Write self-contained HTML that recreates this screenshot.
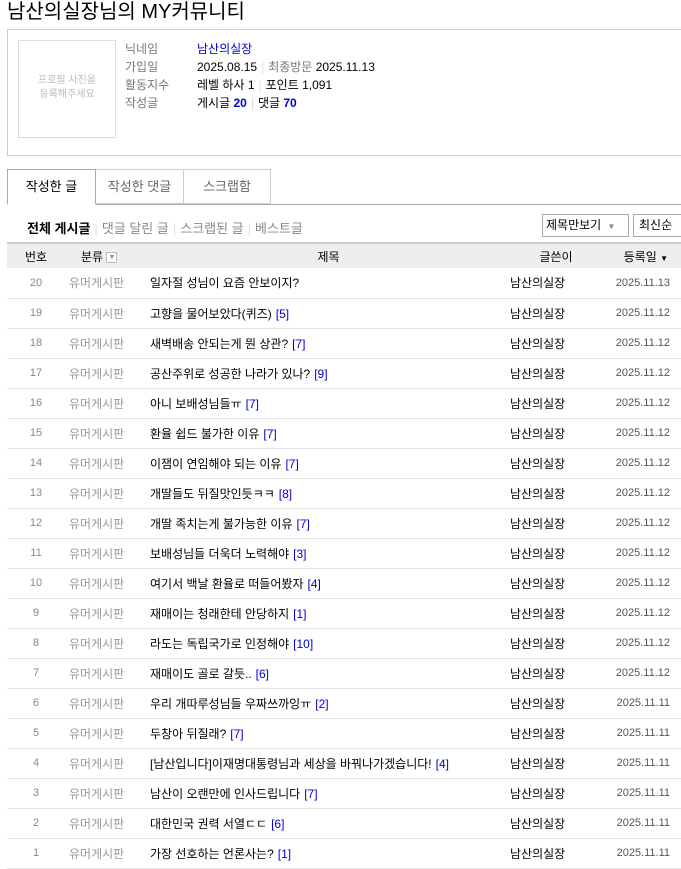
<!DOCTYPE html>
<html><head><meta charset="utf-8"><style>
*{margin:0;padding:0;box-sizing:border-box}
body{width:681px;height:867px;overflow:hidden;background:#fff;font-family:"Liberation Sans","Noto Sans CJK KR","NanumGothic",sans-serif;font-size:12px;color:#000;position:relative}
.a{position:absolute;white-space:nowrap}
.lab{color:#777}
.sep{color:#ddd;margin:0 4px}
.b{color:#0000cc;font-weight:bold}
table{position:absolute;left:7px;top:242px;width:674px;border-collapse:collapse;table-layout:fixed}
th{height:25px;background:#eee;border-top:2px solid #ccc;font-weight:normal;font-size:12px}
td{height:30px;border-bottom:1px solid #e3e3e3;font-size:12px;white-space:nowrap;overflow:hidden}
td.n{color:#888;text-align:center;font-size:11px}
td.c{color:#999;padding-left:4px}
td.t{padding-left:1px}
td.t span{color:#0000cc;margin-left:4px}
td.w{padding-left:2px}
td.d{color:#555;font-size:11px;text-align:right;padding-right:11px}
</style></head><body>
<div class="a" style="left:7px;top:0;font-size:20px;line-height:24px">남산의실장님의 MY커뮤니티</div>
<div class="a" style="left:7px;top:29px;width:680px;height:127px;border:1px solid #ccc"></div>
<div class="a" style="left:18px;top:40px;width:98px;height:98px;border:1px solid #ddd;color:#bbb;font-size:10px;text-align:center;padding-top:33px;line-height:14px;white-space:normal">프로필 사진을<br>등록해주세요</div>
<div class="a lab" style="left:125px;top:40px;line-height:18px">닉네임<br>가입일<br>활동지수<br>작성글</div>
<div class="a" style="left:197px;top:40px;line-height:18px"><span style="color:#0000cc">남산의실장</span><br>2025.08.15<span class="sep">|</span><span class="lab">최종방문</span> 2025.11.13<br>레벨 하사 1<span class="sep">|</span>포인트 1,091<br>게시글 <span class="b">20</span><span class="sep">|</span>댓글 <span class="b">70</span></div>
<div class="a" style="left:7px;top:204px;width:674px;height:1px;background:#aaa"></div>
<div class="a" style="left:7px;top:169px;width:89px;height:36px;border:1px solid #aaa;border-bottom:1px solid #fff;background:#fff;text-align:center;line-height:34px;font-size:13px">작성한 글</div>
<div class="a" style="left:96px;top:169px;width:88px;height:35px;border:1px solid #ccc;border-left:none;text-align:center;line-height:34px;color:#666;font-size:13px">작성한 댓글</div>
<div class="a" style="left:184px;top:169px;width:87px;height:35px;border:1px solid #ccc;border-left:none;text-align:center;line-height:34px;color:#666;font-size:13px">스크랩함</div>
<div class="a" style="left:27px;top:218px;font-size:13px;color:#888"><b style="color:#000">전체 게시글</b><span class="sep">|</span>댓글 달린 글<span class="sep">|</span>스크랩된 글<span class="sep">|</span>베스트글</div>
<div class="a" style="left:542px;top:214px;width:87px;height:23px;border:1px solid #aaa;line-height:21px;padding-left:3px;font-size:12px">제목만보기 <span style="color:#888;font-size:8px;margin-left:3px">▼</span></div>
<div class="a" style="left:633px;top:214px;width:50px;height:23px;border:1px solid #aaa;line-height:21px;padding-left:5px">최신순</div>
<table>
<colgroup><col style="width:58px"><col style="width:84px"><col style="width:359px"><col style="width:96px"><col style="width:77px"></colgroup>
<tr><th>번호</th><th style="text-align:left;padding-left:16px">분류 <span style="display:inline-block;width:11px;height:11px;border:1px solid #bbb;font-size:7px;color:#888;line-height:9px;text-align:center;background:#fff;vertical-align:middle">▼</span></th><th>제목</th><th>글쓴이</th><th style="text-align:right;padding-right:13px">등록일 <span style="font-size:8px">▼</span></th></tr>
<tr><td class="n">20</td><td class="c">유머게시판</td><td class="t">일자절 성님이 요즘 안보이지?</td><td class="w">남산의실장</td><td class="d">2025.11.13</td></tr>
<tr><td class="n">19</td><td class="c">유머게시판</td><td class="t">고향을 물어보았다(퀴즈)<span>[5]</span></td><td class="w">남산의실장</td><td class="d">2025.11.12</td></tr>
<tr><td class="n">18</td><td class="c">유머게시판</td><td class="t">새벽배송 안되는게 뭔 상관?<span>[7]</span></td><td class="w">남산의실장</td><td class="d">2025.11.12</td></tr>
<tr><td class="n">17</td><td class="c">유머게시판</td><td class="t">공산주위로 성공한 나라가 있나?<span>[9]</span></td><td class="w">남산의실장</td><td class="d">2025.11.12</td></tr>
<tr><td class="n">16</td><td class="c">유머게시판</td><td class="t">아니 보배성님들ㅠ<span>[7]</span></td><td class="w">남산의실장</td><td class="d">2025.11.12</td></tr>
<tr><td class="n">15</td><td class="c">유머게시판</td><td class="t">환율 쉽드 불가한 이유<span>[7]</span></td><td class="w">남산의실장</td><td class="d">2025.11.12</td></tr>
<tr><td class="n">14</td><td class="c">유머게시판</td><td class="t">이잼이 연임해야 되는 이유<span>[7]</span></td><td class="w">남산의실장</td><td class="d">2025.11.12</td></tr>
<tr><td class="n">13</td><td class="c">유머게시판</td><td class="t">개딸들도 뒤질맛인듯ㅋㅋ<span>[8]</span></td><td class="w">남산의실장</td><td class="d">2025.11.12</td></tr>
<tr><td class="n">12</td><td class="c">유머게시판</td><td class="t">개딸 족치는게 불가능한 이유<span>[7]</span></td><td class="w">남산의실장</td><td class="d">2025.11.12</td></tr>
<tr><td class="n">11</td><td class="c">유머게시판</td><td class="t">보배성님들 더욱더 노력해야<span>[3]</span></td><td class="w">남산의실장</td><td class="d">2025.11.12</td></tr>
<tr><td class="n">10</td><td class="c">유머게시판</td><td class="t">여기서 백날 환율로 떠들어봤자<span>[4]</span></td><td class="w">남산의실장</td><td class="d">2025.11.12</td></tr>
<tr><td class="n">9</td><td class="c">유머게시판</td><td class="t">재매이는 청래한테 안당하지<span>[1]</span></td><td class="w">남산의실장</td><td class="d">2025.11.12</td></tr>
<tr><td class="n">8</td><td class="c">유머게시판</td><td class="t">라도는 독립국가로 인정해야<span>[10]</span></td><td class="w">남산의실장</td><td class="d">2025.11.12</td></tr>
<tr><td class="n">7</td><td class="c">유머게시판</td><td class="t">재매이도 골로 갈듯..<span>[6]</span></td><td class="w">남산의실장</td><td class="d">2025.11.12</td></tr>
<tr><td class="n">6</td><td class="c">유머게시판</td><td class="t">우리 개따루성님들 우짜쓰까잉ㅠ<span>[2]</span></td><td class="w">남산의실장</td><td class="d">2025.11.11</td></tr>
<tr><td class="n">5</td><td class="c">유머게시판</td><td class="t">두창아 뒤질래?<span>[7]</span></td><td class="w">남산의실장</td><td class="d">2025.11.11</td></tr>
<tr><td class="n">4</td><td class="c">유머게시판</td><td class="t">[남산입니다]이재명대통령님과 세상을 바꿔나가겠습니다!<span>[4]</span></td><td class="w">남산의실장</td><td class="d">2025.11.11</td></tr>
<tr><td class="n">3</td><td class="c">유머게시판</td><td class="t">남산이 오랜만에 인사드립니다<span>[7]</span></td><td class="w">남산의실장</td><td class="d">2025.11.11</td></tr>
<tr><td class="n">2</td><td class="c">유머게시판</td><td class="t">대한민국 권력 서열ㄷㄷ<span>[6]</span></td><td class="w">남산의실장</td><td class="d">2025.11.11</td></tr>
<tr><td class="n">1</td><td class="c">유머게시판</td><td class="t">가장 선호하는 언론사는?<span>[1]</span></td><td class="w">남산의실장</td><td class="d">2025.11.11</td></tr>
</table>
</body></html>
